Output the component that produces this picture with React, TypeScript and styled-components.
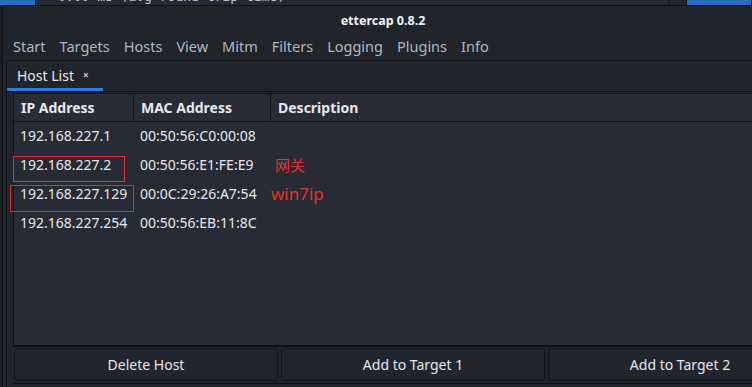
import React from "react";
import styled, { createGlobalStyle } from "styled-components";

const Global = createGlobalStyle`
  html, body { margin: 0; padding: 0; background: #1a1b21; overflow: hidden; }
  body { width: 752px; height: 387px; font-family: "Noto Sans", "Noto Sans CJK SC", sans-serif; }
  #root { width: 752px; height: 387px; overflow: hidden; }
`;

const Screen = styled.div`
  width: 752px;
  height: 387px;
  overflow: hidden;
  display: flex;
  flex-direction: column;
  background: #1c1d23;
`;

const Desktop = styled.div`
  height: 5px;
  flex: none;
  display: flex;
  overflow: hidden;
`;

const DesktopBlock = styled.div<{ $w: number; $bg: string }>`
  width: ${(p) => p.$w}px;
  flex: ${(p) => (p.$w ? "none" : "1")};
  background: ${(p) => p.$bg};
  border-right: 1px solid #15161b;
  overflow: hidden;
`;

const TermText = styled.div`
  font-family: "DejaVu Sans Mono", monospace;
  font-size: 13px;
  line-height: 13px;
  color: #c9ccd3;
  margin-top: -10px;
  padding-left: 22px;
  white-space: pre;
`;

const Window = styled.div`
  width: 760px;
  flex: 1;
  margin-left: 2px;
  background: #22242c;
  border-top: 1px solid #111217;
  border-left: 1px solid #111217;
  border-top-left-radius: 5px;
  display: flex;
  flex-direction: column;
  overflow: hidden;
`;

const TitleBar = styled.div`
  height: 26px;
  flex: none;
  display: flex;
  align-items: center;
  justify-content: center;
  font-weight: bold;
  font-size: 12.5px;
  color: #f2f3f5;
  padding-top: 1px;
`;

const MenuBar = styled.div`
  height: 25px;
  flex: none;
  display: flex;
  align-items: center;
  padding: 0 0 2px 3px;
`;

const MenuItem = styled.span`
  font-size: 14.5px;
  color: #aeb7c4;
  padding: 0 7px;
`;

const Notebook = styled.div`
  flex: 1;
  margin-left: 3px;
  border-top: 1px solid #111217;
  border-left: 1px solid #111217;
  display: flex;
  flex-direction: column;
  min-height: 0;
`;

const TabStrip = styled.div`
  height: 30px;
  flex: none;
  display: flex;
`;

const Tab = styled.div`
  width: 96px;
  display: flex;
  align-items: center;
  padding-left: 10px;
  box-sizing: border-box;
  border-bottom: 3px solid #2e7be6;
  font-size: 14px;
  color: #e8eaee;
  gap: 9px;
  padding-top: 1px;
`;

const TabClose = styled.span`
  font-size: 10px;
  color: #c9ccd3;
  font-weight: bold;
`;

const Page = styled.div`
  flex: 1;
  border-top: 1px solid #111217;
  padding: 1px 0 3px 6px;
  display: flex;
  flex-direction: column;
  min-height: 0;
`;

const Tree = styled.div`
  flex: 1;
  background: #282a35;
  border-top: 1px solid #111217;
  border-left: 1px solid #111217;
  border-bottom: 2px solid #111217;
  min-height: 0;
`;

const Grid = styled.div`
  display: grid;
  grid-template-columns: 120px 137px 1fr;
`;

const HeadCell = styled.div`
  height: 27px;
  display: flex;
  align-items: center;
  padding-left: 7px;
  font-weight: bold;
  font-size: 14px;
  color: #e6e8ec;
  background: #292b36;
  border-right: 1px solid #16171d;
  border-bottom: 1px solid #111217;
`;

const Cell = styled.div`
  position: relative;
  height: 29px;
  box-sizing: border-box;
  padding-bottom: 2px;
  display: flex;
  align-items: center;
  padding-left: 6px;
  font-size: 14px;
  color: #e6e8ec;
  white-space: nowrap;
`;

const Note = styled.span<{ $size: number; $shift: number }>`
  color: #e2332f;
  font-size: ${(p) => p.$size}px;
  margin-left: ${(p) => p.$shift}px;
  margin-top: -1px;
`;

const Mark = styled.span<{ $l: number; $t: number; $w: number; $h: number }>`
  position: absolute;
  left: ${(p) => p.$l}px;
  top: ${(p) => p.$t}px;
  width: ${(p) => p.$w}px;
  height: ${(p) => p.$h}px;
  border: 1px solid #d9342f;
  box-sizing: border-box;
`;

const ButtonRow = styled.div`
  flex: none;
  display: grid;
  grid-template-columns: repeat(3, 264px);
  gap: 3px;
  padding: 1px 0 2px 1px;
  border-bottom: 1px solid #111217;
`;

const Button = styled.div`
  height: 33px;
  box-sizing: border-box;
  border: 1px solid #14151a;
  border-radius: 4px;
  background: #23252e;
  display: flex;
  align-items: center;
  justify-content: center;
  font-size: 14px;
  color: #e3e7ee;
`;

const menus = ["Start", "Targets", "Hosts", "View", "Mitm", "Filters", "Logging", "Plugins", "Info"];

type Host = { ip: string; mac: string; note?: string; noteSize?: number; noteShift?: number; mark?: [number, number, number, number] };

const hosts: Host[] = [
  { ip: "192.168.227.1", mac: "00:50:56:C0:00:08" },
  { ip: "192.168.227.2", mac: "00:50:56:E1:FE:E9", note: "网关", noteSize: 15, noteShift: -2, mark: [-1, 5, 112, 26] },
  { ip: "192.168.227.129", mac: "00:0C:29:26:A7:54", note: "win7ip", noteSize: 17, noteShift: -6, mark: [-4, 5, 124, 27] },
  { ip: "192.168.227.254", mac: "00:50:56:EB:11:8C" },
];

export default function App() {
  return (
    <Screen>
      <Global />
      <Desktop>
        <DesktopBlock $w={35} $bg="#2b6ac0" />
        <DesktopBlock $w={632} $bg="#262833">
          <TermText>0.00 ms (avg round trip time)</TermText>
        </DesktopBlock>
        <DesktopBlock $w={17} $bg="#23252f" />
        <DesktopBlock $w={0} $bg="#2b6ac0" />
      </Desktop>
      <Window>
        <TitleBar>ettercap 0.8.2</TitleBar>
        <MenuBar>
          {menus.map((m) => (
            <MenuItem key={m}>{m}</MenuItem>
          ))}
        </MenuBar>
        <Notebook>
          <TabStrip>
            <Tab>
              Host List <TabClose>×</TabClose>
            </Tab>
          </TabStrip>
          <Page>
            <Tree>
              <Grid>
                <HeadCell>IP Address</HeadCell>
                <HeadCell>MAC Address</HeadCell>
                <HeadCell>Description</HeadCell>
                {hosts.map((h) => (
                  <React.Fragment key={h.ip}>
                    <Cell>
                      {h.mark && <Mark $l={h.mark[0]} $t={h.mark[1]} $w={h.mark[2]} $h={h.mark[3]} />}
                      {h.ip}
                    </Cell>
                    <Cell>{h.mac}</Cell>
                    <Cell>
                      {h.note && (
                        <Note $size={h.noteSize ?? 15} $shift={h.noteShift ?? 0}>
                          {h.note}
                        </Note>
                      )}
                    </Cell>
                  </React.Fragment>
                ))}
              </Grid>
            </Tree>
            <ButtonRow>
              <Button>Delete Host</Button>
              <Button>Add to Target 1</Button>
              <Button>Add to Target 2</Button>
            </ButtonRow>
          </Page>
        </Notebook>
      </Window>
    </Screen>
  );
}
